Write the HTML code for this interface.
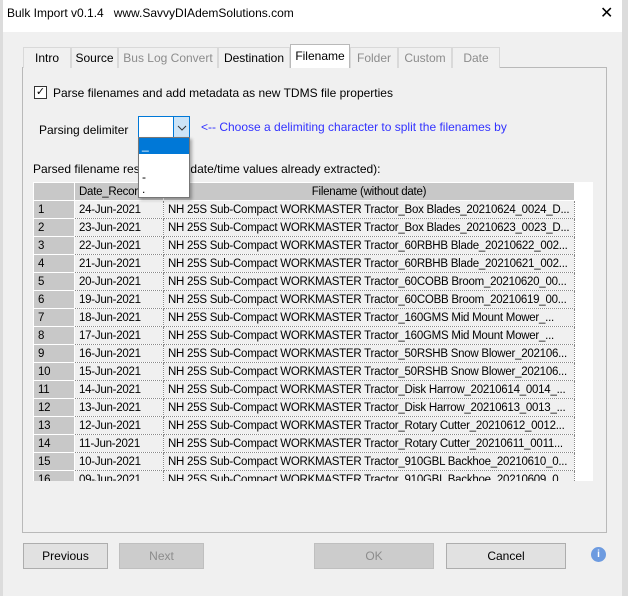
<!DOCTYPE html>
<html><head><style>
*{margin:0;padding:0;box-sizing:border-box}
body{width:628px;height:596px;background:#f0f0f0;font-family:"Liberation Sans",sans-serif;font-size:12px;color:#000;position:relative;overflow:hidden}
.abs{position:absolute}
.title{left:3px;top:0;width:619px;height:32px;background:#fff;}
.tab{position:absolute;top:47px;height:21px;border:1px solid #d9d9d9;border-bottom:none;background:#f0f0f0;text-align:center;line-height:20px;font-size:12px;white-space:nowrap;overflow:hidden}
.dis{color:#8c8c8c}
.btn{position:absolute;top:543px;height:26px;border:1px solid #adadad;background:#e1e1e1;text-align:center;line-height:24px;font-size:12px}
table{border-collapse:collapse;font-size:11.5px;letter-spacing:-0.25px}
td{height:18px;border:1px dotted #888;padding:0 4px;white-space:nowrap;overflow:hidden;text-overflow:ellipsis;background:#f0f0f0}
td.n{background:#c8c8c8;border:1px solid #fff;width:41px}
</style></head><body>
<div class="abs" style="left:0;top:0;width:3px;height:596px;background:#dcdcdc"></div>
<div class="abs" style="left:622px;top:0;width:6px;height:596px;background:#dcdcdc"></div>
<div class="abs title"></div>
<div class="abs" style="left:7px;top:6px;font-size:12px">Bulk Import v0.1.4&nbsp;&nbsp; www.SavvyDIAdemSolutions.com</div>
<div class="abs" style="left:600px;top:3px;font-size:16px">✕</div>

<div class="abs" style="left:22px;top:67px;width:585px;height:466px;border:1px solid #b9b9b9"></div>
<div class="tab" style="left:23px;width:48px">Intro</div>
<div class="tab" style="left:71px;width:47px">Source</div>
<div class="tab dis" style="left:118px;width:100px">Bus Log Convert</div>
<div class="tab" style="left:218px;width:72px">Destination</div>
<div class="tab" style="left:290px;width:60px;top:44px;height:24px;background:#fff;border-color:#b9b9b9;line-height:22px">Filename</div>
<div class="tab dis" style="left:350px;width:48px">Folder</div>
<div class="tab dis" style="left:398px;width:54px">Custom</div>
<div class="tab dis" style="left:452px;width:48px">Date</div>

<div class="abs" style="left:34px;top:86px;width:13px;height:13px;border:1px solid #333;background:#fff;font-size:11px;line-height:11px;text-align:center">✓</div>
<div class="abs" style="left:53px;top:86px">Parse filenames and add metadata as new TDMS file properties</div>
<div class="abs" style="left:39px;top:123px">Parsing delimiter</div>
<div class="abs" style="left:138px;top:116px;width:52px;height:22px;border:1px solid #0078d7;background:#fff"></div>
<div class="abs" style="left:173px;top:117px;width:16px;height:20px;background:#cce4f7;border-left:1px solid #0078d7"><svg width="16" height="20"><path d="M4 9 L8 13 L12 9" fill="none" stroke="#333" stroke-width="1"/></svg></div>
<div class="abs" style="left:201px;top:120px;color:#3232ff">&lt;-- Choose a delimiting character to split the filenames by</div>
<div class="abs" style="left:33px;top:162px">Parsed filename results (with date/time values already extracted):</div>

<div class="abs" style="left:33px;top:182px;width:560px;height:299px;background:#fff;overflow:hidden">
<table style="width:541px;table-layout:fixed">
<tr><td class="n" style="height:17px"></td><td style="width:89px;background:#c8c8c8;border:1px solid #fff">Date_Recorded</td><td style="width:411px;background:#c8c8c8;border:1px solid #fff;text-align:center">Filename (without date)</td></tr>
<tr><td class="n">1</td><td>24-Jun-2021</td><td>NH 25S Sub-Compact WORKMASTER Tractor_Box Blades_20210624_0024_D...</td></tr>
<tr><td class="n">2</td><td>23-Jun-2021</td><td>NH 25S Sub-Compact WORKMASTER Tractor_Box Blades_20210623_0023_D...</td></tr>
<tr><td class="n">3</td><td>22-Jun-2021</td><td>NH 25S Sub-Compact WORKMASTER Tractor_60RBHB Blade_20210622_002...</td></tr>
<tr><td class="n">4</td><td>21-Jun-2021</td><td>NH 25S Sub-Compact WORKMASTER Tractor_60RBHB Blade_20210621_002...</td></tr>
<tr><td class="n">5</td><td>20-Jun-2021</td><td>NH 25S Sub-Compact WORKMASTER Tractor_60COBB Broom_20210620_00...</td></tr>
<tr><td class="n">6</td><td>19-Jun-2021</td><td>NH 25S Sub-Compact WORKMASTER Tractor_60COBB Broom_20210619_00...</td></tr>
<tr><td class="n">7</td><td>18-Jun-2021</td><td>NH 25S Sub-Compact WORKMASTER Tractor_160GMS Mid Mount Mower_...</td></tr>
<tr><td class="n">8</td><td>17-Jun-2021</td><td>NH 25S Sub-Compact WORKMASTER Tractor_160GMS Mid Mount Mower_...</td></tr>
<tr><td class="n">9</td><td>16-Jun-2021</td><td>NH 25S Sub-Compact WORKMASTER Tractor_50RSHB Snow Blower_202106...</td></tr>
<tr><td class="n">10</td><td>15-Jun-2021</td><td>NH 25S Sub-Compact WORKMASTER Tractor_50RSHB Snow Blower_202106...</td></tr>
<tr><td class="n">11</td><td>14-Jun-2021</td><td>NH 25S Sub-Compact WORKMASTER Tractor_Disk Harrow_20210614_0014_...</td></tr>
<tr><td class="n">12</td><td>13-Jun-2021</td><td>NH 25S Sub-Compact WORKMASTER Tractor_Disk Harrow_20210613_0013_...</td></tr>
<tr><td class="n">13</td><td>12-Jun-2021</td><td>NH 25S Sub-Compact WORKMASTER Tractor_Rotary Cutter_20210612_0012...</td></tr>
<tr><td class="n">14</td><td>11-Jun-2021</td><td>NH 25S Sub-Compact WORKMASTER Tractor_Rotary Cutter_20210611_0011...</td></tr>
<tr><td class="n">15</td><td>10-Jun-2021</td><td>NH 25S Sub-Compact WORKMASTER Tractor_910GBL Backhoe_20210610_0...</td></tr>
<tr><td class="n">16</td><td>09-Jun-2021</td><td>NH 25S Sub-Compact WORKMASTER Tractor_910GBL Backhoe_20210609_0...</td></tr>
</table></div>

<div class="abs" style="left:138px;top:137px;width:52px;height:61px;background:#fff;border:1px solid #777;box-shadow:2px 2px 3px rgba(0,0,0,.3)">
<div style="height:16px;background:#0078d7;color:#fff;padding-left:3px;line-height:14px">_</div>
<div style="padding-left:3px;line-height:14px;margin-top:16px">-</div>
<div style="padding-left:3px;line-height:10px">.</div>
</div>

<div class="btn" style="left:23px;width:85px">Previous</div>
<div class="btn dis" style="left:119px;width:85px;background:#cccccc;border-color:#bfbfbf">Next</div>
<div class="btn dis" style="left:314px;width:120px;background:#cccccc;border-color:#bfbfbf">OK</div>
<div class="btn" style="left:446px;width:120px">Cancel</div>
<div class="abs" style="left:591px;top:547px;width:15px;height:15px;border-radius:50%;background:#6d9be0;color:#fff;font-size:10px;font-weight:bold;text-align:center;line-height:15px">i</div>
</body></html>
